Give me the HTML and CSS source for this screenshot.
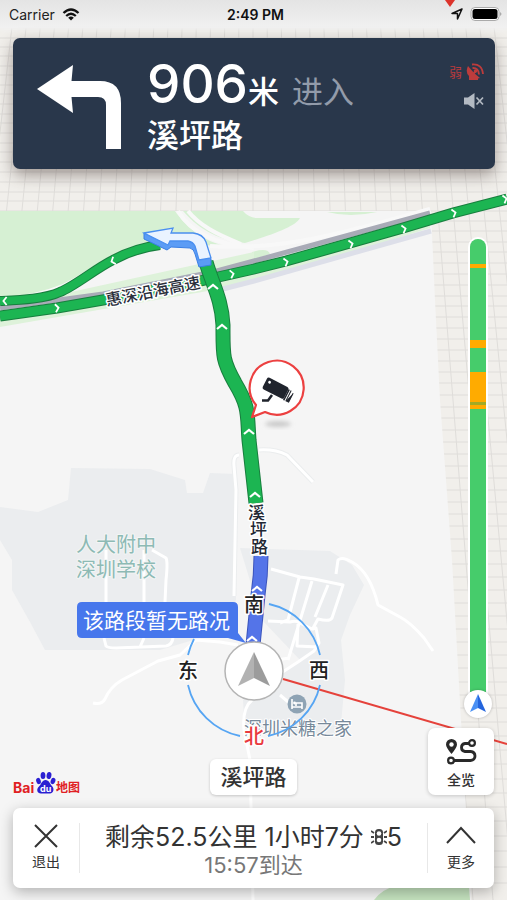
FILE: index.html
```html
<!DOCTYPE html>
<html lang="zh-CN">
<head>
<meta charset="utf-8">
<meta name="viewport" content="width=device-width, initial-scale=1">
<title>导航</title>
<link rel="stylesheet" href="styles.css">
</head>
<body>
<main class="screen">
  <svg class="map" viewBox="0 0 507 900" preserveAspectRatio="xMidYMid slice" aria-hidden="true">
    <defs>
      <filter id="soft" x="-50%" y="-50%" width="200%" height="200%"><feGaussianBlur stdDeviation="2"/></filter>
      <path id="chev" d="M-5 2L0 -2L5 2" fill="none" stroke="#fff" stroke-width="2.2"/>
    </defs>
    <rect width="507" height="900" fill="#f1efeb"/>
    <!-- perspective grid -->
    <g fill="none" stroke="#dfddda" stroke-width="1">
      <path d="M253 0V900M267 0L273 900M281 0L293 900M295 0L313 900M309 0L333 900M323 0L353 900M337 0L373 900M351 0L393 900M365 0L413 900M379 0L433 900M393 0L453 900M407 0L473 900M421 0L493 900M435 0L513 900M449 0L533 900M463 0L553 900M477 0L573 900M491 0L593 900M505 0L613 900M239 0L233 900M225 0L213 900M211 0L193 900M197 0L173 900M183 0L153 900M169 0L133 900M155 0L113 900M141 0L93 900M127 0L73 900M113 0L53 900M99 0L33 900M85 0L13 900M71 0L-7 900M57 0L-27 900M43 0L-47 900M29 0L-67 900M15 0L-87 900M1 0L-107 900"/>
      <path d="M0 38H507M0 47H507M0 56H507M0 66H507M0 75H507M0 85H507M0 94H507M0 104H507M0 114H507M0 123H507M0 133H507M0 143H507M0 152H507M0 162H507M0 172H507M0 182H507M0 192H507M0 201H507M0 211H507M420 221H507M420 231H507M420 242H507M420 252H507M420 263H507M420 274H507M420 285H507M420 296H507M420 306H507M420 317H507M420 328H507M420 339H507M420 350H507M420 361H507M420 372H507M420 383H507M420 395H507M420 407H507M420 418H507M420 430H507M420 442H507M420 454H507M420 466H507M420 478H507M420 490H507M420 502H507M420 514H507M420 526H507M420 539H507M420 551H507M420 564H507M420 577H507M420 590H507M420 603H507M420 616H507M420 629H507M420 642H507M420 655H507M420 668H507M420 682H507M420 695H507M420 708H507M420 722H507M420 736H507M420 750H507M420 764H507M420 779H507M420 793H507M420 807H507M420 821H507M420 836H507M420 851H507M420 867H507M420 883H507"/>
    </g>
    <!-- land -->
    <path d="M0 211H431L435 300L440 400L452 560L461 720L471 900H0Z" fill="#f5f5f5"/>
    <path d="M0 211H175C185 225 200 240 225 246L150 243C110 250 90 272 62 285C40 294 20 297 0 298Z" fill="#d6f0d3"/>
    <path d="M183 211H243Q248 217 256 218H300C296 226 275 234 245 243C215 240 196 226 183 211Z" fill="#d6f0d3"/>
    <path d="M327 212H377Q350 218 327 212ZM252 252Q268 247 270 254L252 260Z" fill="#d6f0d3"/>
    <path d="M62 294L103 285L254 252V262L103 296L50 303ZM0 320L254 274L430 222V228L254 283L0 327Z" fill="#def2da"/>
    <path d="M374 900Q382 889 396 886H469L470 900Z" fill="#c5e3bf"/>
    <g fill="#ebedef">
      <path d="M0 507L38 512L68 500L71 468L150 469L185 480L187 493H203L210 473L236 474V600L210 635L160 650H45L30 622L12 590V560L0 540Z"/>
      <path d="M240 548L330 551L352 565L364 585L350 615L341 640L345 680L340 735H245L243 700L300 660L262 620Z"/>
    </g>
    <path d="M178 211C189 230 212 244 254 248M188 211C199 225 216 234 241 244M210 246C290 252 370 225 430 209" fill="none" stroke="#f8f8f8" stroke-width="4"/>
    <path d="M0 299C20 298 40 295 62 286C90 273 110 251 150 244" fill="none" stroke="#f8f8f8" stroke-width="3"/>
    <path d="M239 455Q233 455 234 466L236 490L234 596M259 450Q275 449 287 455L313 482" fill="none" stroke="#ebedee" stroke-width="5"/>
    <g class="lane">
      <path d="M239 455Q233 455 234 466L236 490L234 596M259 450Q275 449 287 455L313 482"/>
      <path d="M106 550V602M144 550V602M152 550L166 558Q168 562 166 580L165 602M104 638L106 646Q108 648 116 648L166 646Q172 645 173 638M140 647L144 638M93 703Q102 705 105 699Q110 687 122 680L158 661L180 655L196 640L220 642L238 645"/>
      <path d="M271 569L300 577L314 579L343 585L332 618Q330 622 318 619L312 630M299 578L288 620L280 623M312 581L288 660M328 585L315 617M268 621L290 622Q296 620 300 623L312 629L316 628L319 643L314 651L298 662L278 675M298 624L297 646L318 647M275 660L290 658M336 574L338 560Q342 556 352 562Q370 572 378 605L400 617Q410 622 424 638L433 651M252 700Q242 708 244 730L250 760L253 900M280 695L300 712"/>
    </g>
    <!-- highway -->
    <g fill="none">
      <path d="M0 308L103 294L213 272L254 261L430 213" stroke="#a9abb7" stroke-width="5"/>
      <path d="M223 289L254 281L431 231" stroke="#dddfe9" stroke-width="5"/>
      <path d="M0 301C20 300 45 299 60 292C75 286 95 269 113 260Q135 248 160 245" stroke="#187e3e" stroke-width="10"/>
      <path d="M0 301C20 300 45 299 60 292C75 286 95 269 113 260Q135 248 160 245" stroke="#1cb552" stroke-width="8"/>
      <path d="M0 316L57 308L103 300L200 281L254 269L286 261L350 243L403 228L453 213L507 199" stroke="#187e3e" stroke-width="11"/>
      <path d="M0 316L57 308L103 300L200 281L254 269L286 261L350 243L403 228L453 213L507 199" stroke="#1cb552" stroke-width="9"/>
      <path d="M206 262C212 283 222 300 223 325C223 355 222 360 235 383C250 408 247 415 249 440L256 503" stroke="#187e3e" stroke-width="15"/>
      <path d="M206 262C212 283 222 300 223 325C223 355 222 360 235 383C250 408 247 415 249 440L256 503" stroke="#1cb552" stroke-width="13"/>
      <path d="M261 556Q261 575 258 595L253 645" stroke="#3c55bc" stroke-width="15"/>
      <path d="M261 556Q261 575 258 595L253 645" stroke="#5474e8" stroke-width="13"/>
    </g>
    <use href="#chev" x="213" y="287"/><use href="#chev" x="222" y="327"/><use href="#chev" x="249" y="432"/><use href="#chev" x="255" y="495"/><use href="#chev" x="257" y="589"/><use href="#chev" x="252" y="639"/>
    <use href="#chev" transform="translate(113 261) rotate(-110) scale(.8)"/><use href="#chev" transform="translate(5 301) rotate(-90) scale(.8)"/>
    <use href="#chev" transform="translate(57 308) rotate(82) scale(.8)"/><use href="#chev" transform="translate(232 274) rotate(78) scale(.8)"/><use href="#chev" transform="translate(286 262) rotate(75) scale(.8)"/><use href="#chev" transform="translate(351 244) rotate(75) scale(.8)"/><use href="#chev" transform="translate(404 229) rotate(75) scale(.8)"/><use href="#chev" transform="translate(454 213) rotate(75) scale(.8)"/><use href="#chev" transform="translate(505 199) rotate(75) scale(.8)"/>
    <!-- turn marker -->
    <path d="M144 233V239L167 250L171 247L190 248Q194 249 195 254L199 267L211 265V259L190 240Z" fill="#5b9cf5" stroke="#3a7fe4"/>
    <path d="M144 233L173 228L171 233L193 233Q203 234 206 242L211 258L199 260L195 246Q193 242 188 241L170 241L168 245Z" fill="#eaf3ff" stroke="#4a8ff0" stroke-width="1.3"/>
    <!-- labels -->
    <text class="label label-hwy" transform="translate(107 306) rotate(-11)">惠深沿海高速</text>
    <g class="label label-street"><text x="248" y="519">溪</text><text x="250" y="536">坪</text><text x="251" y="553">路</text></g>
    <g class="label label-school"><text x="76" y="552">人大附中</text><text x="76" y="577">深圳学校</text></g>
    <text class="label label-poi" x="244" y="735">深圳米糖之家</text>
    <circle cx="297" cy="704" r="9.500" fill="#8ea3b4"/>
    <path d="M292 699V709M292 707H302V703H296V706M302 709V703" fill="none" stroke="#fff" stroke-width="1.600"/><circle cx="294.500" cy="703" r="1.400" fill="#fff"/>
    <!-- camera -->
    <ellipse cx="278" cy="424" rx="13" ry="3" fill="#c9c9c9" filter="url(#soft)"/>
    <path d="M256 405A27 27 0 1 1 265 412L252 417Z" fill="#fff" stroke="#ec4040" stroke-width="2.200" stroke-linejoin="round"/>
    <path d="M262 400.500H268L272 395" fill="none" stroke="#20242d" stroke-width="2.500"/>
    <g transform="translate(278 390) rotate(27)"><rect x="-15" y="-7" width="24" height="13" rx="2" fill="#20242d"/><path d="M9 -5H12V6H9M15 -4V6H12" fill="#20242d" stroke="#20242d"/><path d="M11 -6V7" stroke="#fff"/><circle cx="-11" cy="-3" r="1.400" fill="#fff"/></g>
    <!-- compass -->
    <path d="M283 679L507 744" stroke="#e5423b" stroke-width="2"/>
    <path d="M77 607Q77 602 82 602H233Q238 602 238 607V633L246 643L228 638H82Q77 638 77 633Z" fill="#4777ec"/>
    <path d="M269 604A67 67 0 0 1 320 655M320 685A67 67 0 0 1 268 736M240 736A67 67 0 0 1 188 685M188 655A67 67 0 0 1 194 639" fill="none" stroke="#56a5f3" stroke-width="1.800"/>
    <text class="label label-callout" x="83" y="628">该路段暂无路况</text>
    <g class="label label-compass"><text x="254" y="612">南</text><text x="188" y="678">东</text><text x="319" y="678">西</text><text class="north" x="254" y="744">北</text></g>
    <circle cx="254" cy="671" r="29" fill="#fff" stroke="#b4b4b4" stroke-width="1.500"/>
    <path d="M254 652L238 686L254 678Z" fill="#b2b2b2"/><path d="M254 652L270 686L254 678Z" fill="#9c9c9c"/>
  </svg>

  <header class="status">
    <svg class="pin" width="16" height="7" viewBox="0 0 16 7" aria-hidden="true"><path d="M3 0H13L8 7Z" fill="#dc332b"/></svg>
    <div class="carrier"><span>Carrier</span>
      <svg width="18" height="13" viewBox="0 0 18 13" aria-hidden="true"><g fill="none" stroke="#111" stroke-width="2.300"><path d="M1.500 5Q9 -2 16.500 5M4.200 8Q9 3.500 13.800 8"/></g><path d="M6.200 9.800Q9 7.200 11.800 9.800L9 12.600Z" fill="#111"/></svg>
    </div>
    <time class="clock">2:49 PM</time>
    <div class="power">
      <svg width="12" height="12" viewBox="0 0 12 12" aria-hidden="true"><path d="M11 1L1 5.500H6.500V11Z" fill="none" stroke="#111" stroke-width="1.500" stroke-linejoin="round"/></svg>
      <svg width="32" height="14" viewBox="0 0 32 14" aria-hidden="true"><rect x="1" y=".5" width="28" height="13" rx="4" fill="#fff" stroke="#aaa"/><rect x="2.500" y="2" width="25" height="10" rx="2.500" fill="#000"/><path d="M30 5V9Q31.500 8 31.500 7T30 5Z" fill="#aaa"/></svg>
    </div>
  </header>

  <section class="guide">
    <svg class="turn" viewBox="0 0 84 84" aria-hidden="true"><path d="M0 24L36 0L34.500 16H63Q84 16 84 38V84H69V40Q69 32 61 32H34.500L36 48Z" fill="#fff"/></svg>
    <div class="guide-text">
      <p class="distance"><span class="num">906</span><span class="unit">米</span><span class="enter">进入</span></p>
      <h1 class="road">溪坪路</h1>
    </div>
    <div class="indicators">
      <div class="gps"><span>弱</span>
        <svg width="18" height="18" viewBox="0 0 18 18" aria-hidden="true"><path d="M2 3Q-1 9 3 13L3 17H12V15.500L14 15L8 10Z" fill="#bd3c3c"/><path d="M7 11L10 8M6.500 5Q12.500 4.500 13 11.500M6 1.500Q16 .5 17 11" fill="none" stroke="#bd3c3c" stroke-width="1.900"/><circle cx="9.500" cy="8" r="1.800" fill="#bd3c3c"/></svg>
      </div>
      <button class="mute" aria-label="静音"><svg width="20" height="16" viewBox="0 0 20 16" aria-hidden="true"><path d="M0 4.500H4L10.500 0V16L4 11.500H0Z" fill="#b3bac3"/><path d="M12.500 4.500L19 11.500M19 4.500L12.500 11.500" stroke="#b3bac3" stroke-width="1.700"/></svg></button>
    </div>
  </section>

  <section class="stage">
    <div class="route-bar">
      <i class="clear" style="flex-grow:25"></i><i class="slow" style="flex-grow:4"></i><i class="clear" style="flex-grow:72"></i><i class="slow" style="flex-grow:8"></i><i class="clear" style="flex-grow:24"></i><i class="slow" style="flex-grow:30"></i><i class="mixed" style="flex-grow:3"></i><i class="slow" style="flex-grow:4"></i><i class="clear" style="flex-grow:284"></i>
    </div>
    <svg class="here" width="28" height="28" viewBox="0 0 28 28" aria-hidden="true"><path d="M14 4L6 22L14 18Z" fill="#4a90f4"/><path d="M14 4L22 22L14 18Z" fill="#2465dd"/></svg>
  </section>

  <section class="tools">
    <svg class="logo" width="67" height="24" viewBox="0 0 67 24" role="img" aria-label="Baidu 地图">
      <text x="0" y="22" class="logo-bai">Bai</text>
      <g fill="#2b20d2"><ellipse cx="25.500" cy="10" rx="2.300" ry="3.200" transform="rotate(-15 25.500 10)"/><ellipse cx="30" cy="4.500" rx="2.400" ry="3.500"/><ellipse cx="36" cy="4.500" rx="2.400" ry="3.500" transform="rotate(10 36 4.500)"/><ellipse cx="40" cy="10" rx="2.300" ry="3.200" transform="rotate(20 40 10)"/><path d="M32.500 9C36 9 37 13 39 15C42 18 40 22.500 37 22.500H28C24 22.500 23 18 26 15.500C28.500 13 29 9 32.500 9Z"/></g>
      <text x="27" y="21" class="logo-du">du</text>
      <text x="43" y="21" class="logo-map">地图</text>
    </svg>
    <span class="pill">溪坪路</span>
    <button class="overview">
      <svg width="32" height="27" viewBox="0 0 32 27" aria-hidden="true"><path d="M6.500 1A5.500 5.500 0 0 1 12 6.500Q12 9.500 6.500 16Q1 9.500 1 6.500A5.500 5.500 0 0 1 6.500 1Z" fill="#292929"/><circle cx="6.500" cy="6.500" r="2.200" fill="#fff"/><g fill="none" stroke="#292929" stroke-width="2.800"><path d="M9 22.500H25.500Q30 22 30 18T25.500 13.500H20Q16.500 13 16.500 9.500T20 5.500H24"/><g stroke-width="2.200"><circle cx="6" cy="22.500" r="2.900"/><circle cx="27" cy="5" r="2.900"/></g></g></svg>
      <span>全览</span>
    </button>
  </section>

  <footer class="trip">
    <button class="trip-btn"><svg width="24" height="24" viewBox="0 0 24 24" aria-hidden="true"><path d="M1 1L23 23M23 1L1 23" stroke="#333" stroke-width="2"/></svg><span>退出</span></button>
    <div class="summary">
      <p class="remain">剩余52.5公里 1小时7分 <svg width="16" height="18" viewBox="0 0 16 18" aria-label="红绿灯"><path d="M0 3L3 5M0 9H3M0 15L3 13M16 3L13 5M16 9H13M16 15L13 13" stroke="#444" stroke-width="1.800"/><rect x="4" y="1" width="8" height="16" rx="3.500" fill="#444"/><circle cx="8" cy="5.500" r="2.300" fill="#fff"/><circle cx="8" cy="12" r="2.300" fill="#fff"/></svg>5</p>
      <p class="eta">15:57到达</p>
    </div>
    <button class="trip-btn"><svg width="30" height="24" viewBox="0 0 30 24" aria-hidden="true"><path d="M1 19L15 4L29 19" fill="none" stroke="#333" stroke-width="2"/></svg><span>更多</span></button>
  </footer>
</main>
</body>
</html>
```
FILE: styles.css
```css
* {
  box-sizing: border-box;
}

body,
p,
h1 {
  margin: 0;
}

body {
  font-family: Inter, "Noto Sans CJK SC", sans-serif;
  color: #333;
}

button {
  padding: 0;
  border: 0;
  background: none;
  font: inherit;
  color: inherit;
}

svg {
  display: block;
}

.screen {
  position: relative;
  display: flex;
  flex-direction: column;
  min-height: 100vh;
  padding-bottom: 12px;
  overflow: hidden;
}

.map {
  position: absolute;
  inset: 0;
  width: 100%;
  height: 100%;
}

.lane {
  fill: none;
  stroke: #fff;
  stroke-width: 3px;
  stroke-linejoin: round;
}

.label {
  font-family: "Noto Sans CJK SC", sans-serif;
  paint-order: stroke;
  stroke: #fff;
  stroke-width: 3px;
  stroke-linejoin: round;
}

.label-hwy {
  font-size: 16px;
  font-weight: 500;
  fill: #2b303c;
}

.label-street {
  font-size: 17px;
  font-weight: 500;
  fill: #222733;
}

.label-school {
  font-size: 20px;
  fill: #8dbab4;
  stroke: #f3f5f5;
  stroke-width: 2px;
}

.label-poi {
  font-size: 18px;
  fill: #77899a;
  stroke-width: 2px;
}

.label-callout {
  font-size: 21px;
  fill: #fff;
  stroke: none;
}

.label-compass {
  font-size: 20px;
  font-weight: 500;
  fill: #222;
  text-anchor: middle;
}

.north {
  fill: #e93a40;
}

.status {
  position: relative;
  display: grid;
  grid-template-columns: 1fr auto 1fr;
  align-items: center;
  height: 28px;
  padding: 0 5px 0 9px;
  background: linear-gradient(#e4e4e4, #f1f1f1);
  box-shadow: 0 2px 4px #f1f1f1;
  font-size: 14px;
  color: #222;
}

.pin {
  position: absolute;
  top: 0;
  right: 49px;
}

.carrier,
.power {
  display: flex;
  align-items: center;
  gap: 7px;
}

.power {
  justify-content: flex-end;
}

.clock {
  font-weight: 600;
  color: #111;
}

.guide {
  position: relative;
  display: flex;
  margin: 10px 12px 0 13px;
  height: 131px;
  padding: 0 11px 0 24px;
  border-radius: 7px;
  background: #29374b;
  box-shadow: 0 6px 16px rgba(60, 45, 40, 0.45);
  color: #fff;
}

.turn {
  width: 84px;
  height: 84px;
  margin-top: 27px;
}

.guide-text {
  flex: 1;
  margin-left: 26px;
  padding-top: 16px;
}

.distance {
  display: flex;
  align-items: baseline;
  height: 60px;
  line-height: 60px;
}

.num {
  font-size: 53px;
  font-weight: 500;
}

.unit {
  font-size: 31px;
  font-weight: 500;
}

.enter {
  margin-left: 13px;
  font-size: 31px;
  color: #929baa;
}

.road {
  font-size: 32px;
  font-weight: 500;
  line-height: 44px;
}

.indicators {
  display: flex;
  flex-direction: column;
  align-items: flex-end;
  gap: 12px;
  padding-top: 25px;
}

.gps {
  display: flex;
  align-items: center;
  gap: 4px;
  font-size: 13px;
  line-height: 18px;
  color: #b83a3d;
}

.stage {
  position: relative;
  flex: 1;
  display: flex;
  flex-direction: column;
  align-items: flex-end;
  margin: 68px 15px 0;
}

.route-bar {
  flex: 1;
  display: flex;
  flex-direction: column;
  width: 20px;
  margin-right: 4px;
  border: 2px solid #fff;
  border-radius: 10px 10px 0 0;
  overflow: hidden;
}

.route-bar i {
  flex-basis: 0;
}

.clear {
  background: #46cc6b;
}

.slow {
  background: #ffab00;
}

.mixed {
  background: #a1aa26;
}

.here {
  margin-top: -4px;
  border-radius: 50%;
  background: #fff;
  box-shadow: 0 0 3px rgba(0, 0, 0, 0.25);
}

.tools {
  position: relative;
  display: grid;
  grid-template-columns: 1fr auto 1fr;
  align-items: end;
  margin: 10px 13px 13px;
}

.logo {
  overflow: visible;
}

.logo-bai {
  font: 700 14px Inter, sans-serif;
  fill: #e02023;
}

.logo-du {
  font: 700 9px Inter, sans-serif;
  fill: #fff;
}

.logo-map {
  font: 700 12px "Noto Sans CJK SC", sans-serif;
  fill: #e02023;
}

.pill {
  padding: 0 10px;
  border-radius: 6px;
  background: #fff;
  box-shadow: 0 1px 3px rgba(0, 0, 0, 0.2);
  font-size: 22px;
  font-weight: 500;
  line-height: 36px;
}

.overview {
  justify-self: end;
  display: flex;
  flex-direction: column;
  align-items: center;
  gap: 5px;
  width: 66px;
  padding: 10px 0 5px;
  border-radius: 7px;
  background: #fff;
  box-shadow: 0 1px 4px rgba(0, 0, 0, 0.2);
  font-size: 14px;
  font-weight: 500;
  line-height: 20px;
}

.trip {
  position: relative;
  display: flex;
  align-items: center;
  margin: 0 13px;
  height: 80px;
  border-radius: 7px;
  background: #fff;
  box-shadow: 0 4px 14px rgba(0, 0, 0, 0.28);
}

.trip-btn {
  display: flex;
  flex-direction: column;
  align-items: center;
  gap: 4px;
  width: 66px;
  font-size: 14px;
  line-height: 20px;
}

.summary {
  flex: 1;
  height: 50px;
  border: solid #e8e8e8;
  border-width: 0 1px;
  text-align: center;
  white-space: nowrap;
}

.remain {
  font-size: 25px;
  line-height: 28px;
  color: #333;
}

.remain svg {
  display: inline-block;
}

.eta {
  font-size: 22px;
  line-height: 28px;
  color: #777;
}
```
